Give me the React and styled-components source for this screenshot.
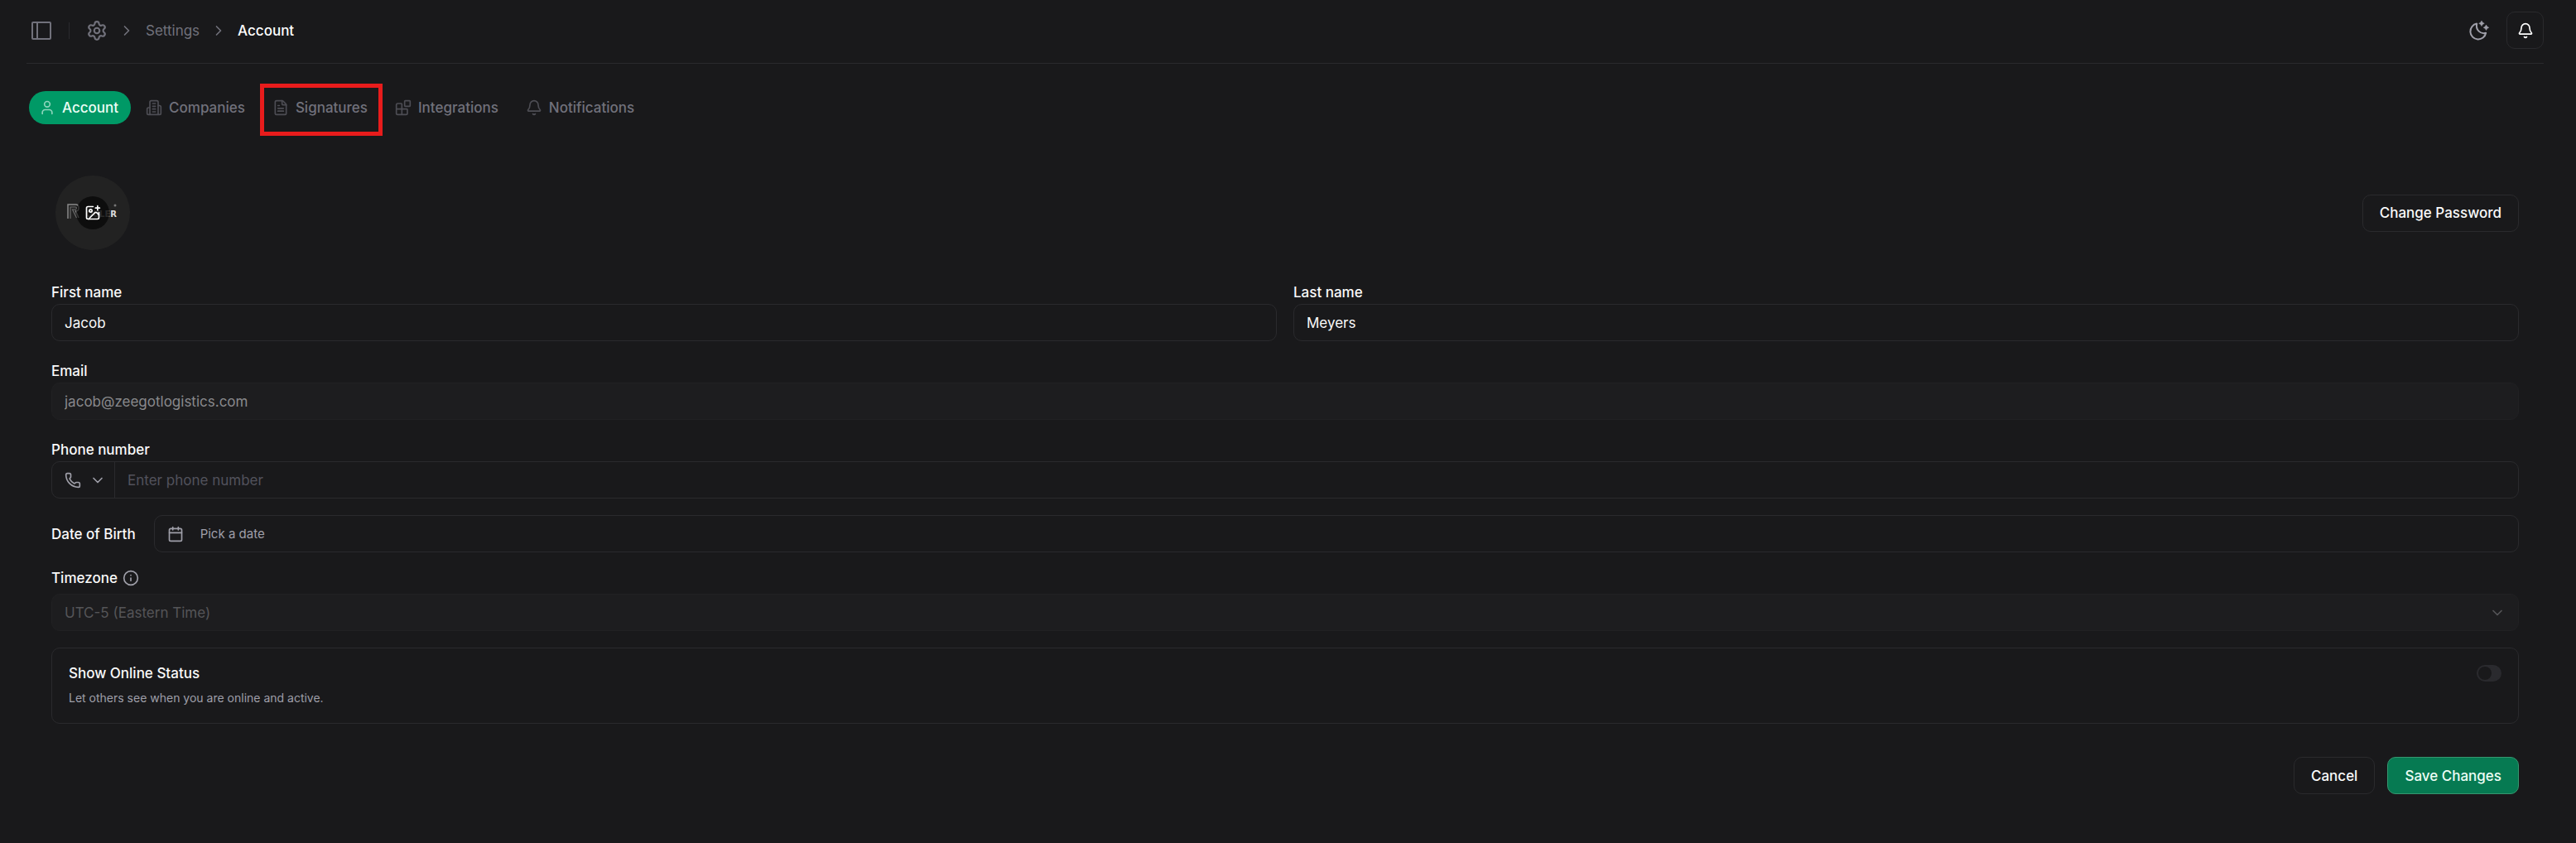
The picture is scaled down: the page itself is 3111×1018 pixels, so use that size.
import React, { useState } from "react";
import styled, { createGlobalStyle, css } from "styled-components";
import {
  Bell,
  Blocks,
  Calendar,
  ChevronDown,
  ChevronRight,
  FileText,
  ImagePlus,
  Info,
  Phone,
  Settings,
  User,
} from "lucide-react";

const GlobalStyle = createGlobalStyle`
  :root {
    --background: #19191b;
    --border: #2a2a2d;
    --foreground: #fafafa;
    --muted: #9f9fa9;
    --subtle: #71717b;
    --faint: #52525c;
    --primary: #009966;
  }

  * {
    box-sizing: border-box;
  }

  body {
    margin: 0;
    background: var(--background);
    color: var(--foreground);
    font-family: Inter, "Liberation Sans", sans-serif;
    font-size: 17px;
    line-height: 22px;
  }

  button,
  input,
  select {
    font: inherit;
    color: inherit;
  }
`;

const Page = styled.div`
  padding: 0 39px 56px 32px;
`;

const Header = styled.header`
  display: flex;
  align-items: center;
  justify-content: space-between;
  height: 77px;
  padding-bottom: 3px;
  border-bottom: 1px solid var(--border);
`;

const HeaderGroup = styled.div`
  display: flex;
  align-items: center;
  gap: ${({ $gap }) => $gap}px;
`;

const IconButton = styled.button`
  display: flex;
  align-items: center;
  justify-content: center;
  width: ${({ $size }) => $size}px;
  height: ${({ $size }) => $size}px;
  padding: 0;
  color: ${({ $color }) => $color};
  background: transparent;
  border: ${({ $outlined }) => ($outlined ? "1px solid var(--border)" : "none")};
  border-radius: 10px;
  cursor: pointer;
`;

const HeaderDivider = styled.span`
  width: 1px;
  height: 20px;
  margin-right: 5px;
  background: var(--border);
`;

const Breadcrumb = styled.nav`
  display: flex;
  align-items: center;
  gap: 13px;
  color: var(--subtle);
`;

const Crumb = styled.a`
  display: flex;
  color: ${({ $current }) => ($current ? "#ffffff" : "var(--subtle)")};
  font-weight: ${({ $current }) => ($current ? 500 : 400)};
  text-decoration: none;
`;

const Tabs = styled.nav`
  display: flex;
  gap: 6px;
  padding: 33px 3px 0;
`;

const Tab = styled.a`
  position: relative;
  display: flex;
  align-items: center;
  gap: 8px;
  height: 40px;
  padding: 0 15px 0 12px;
  border-radius: 20px;
  color: var(--subtle);
  font-weight: 500;
  text-decoration: none;

  svg {
    opacity: 0.6;
  }

  ${({ $active }) =>
    $active &&
    css`
      color: #ecfdf5;
      background: var(--primary);
    `}
`;

const Highlight = styled.span`
  position: absolute;
  inset: -9px -3px -14px;
  border: 5px solid #e81c1c;
  pointer-events: none;
`;

const Form = styled.form`
  display: flex;
  flex-direction: column;
  padding: 62px 30px 0;
`;

const ProfileRow = styled.div`
  display: flex;
  align-items: center;
  justify-content: space-between;
  margin-bottom: 40px;
  padding-left: 5px;
`;

const Avatar = styled.div`
  display: grid;
  place-items: center;
  width: 90px;
  height: 90px;
  border-radius: 50%;
  background: #222222;

  > * {
    grid-area: 1 / 1;
  }
`;

const AvatarUpload = styled.button`
  display: flex;
  align-items: center;
  justify-content: center;
  width: 40px;
  height: 40px;
  padding: 0;
  border: none;
  border-radius: 50%;
  color: #ffffff;
  background: rgba(0, 0, 0, 0.6);
  cursor: pointer;
`;

const Button = styled.button`
  height: 45px;
  padding: 0 20px;
  border: 1px solid ${({ $primary }) => ($primary ? "#36966f" : "var(--border)")};
  border-radius: 10px;
  color: ${({ $primary }) => ($primary ? "#ecfdf5" : "var(--foreground)")};
  background: ${({ $primary }) => ($primary ? "#067a52" : "transparent")};
  font-weight: 500;
  cursor: pointer;
`;

const Columns = styled.div`
  display: grid;
  grid-template-columns: 1fr 1fr;
  gap: 20px;
`;

const Field = styled.div`
  display: flex;
  flex-direction: column;
  gap: 3px;
  margin-bottom: ${({ $last }) => ($last ? 20 : 25)}px;
`;

const Label = styled.label`
  font-weight: 500;
`;

const box = css`
  width: 100%;
  height: 45px;
  border: 1px solid var(--border);
  border-radius: 10px;
  background: transparent;
`;

const TextInput = styled.input`
  ${box}
  padding: 0 15px;
  outline: none;

  &:disabled {
    color: #89898c;
    border-color: #212123;
    background: #1d1d1f;
  }
`;

const PhoneBox = styled.div`
  ${box}
  display: flex;
`;

const CountryPicker = styled.div`
  display: grid;
  align-items: center;
  width: 76px;
  flex-shrink: 0;
  color: var(--muted);
  border-right: 1px solid var(--border);

  > * {
    grid-area: 1 / 1;
  }
`;

const CountryIcons = styled.span`
  display: flex;
  gap: 10px;
  padding-left: 15px;
`;

const CountrySelect = styled.select`
  width: 100%;
  height: 100%;
  opacity: 0;
  cursor: pointer;
`;

const PhoneInput = styled.input`
  flex: 1;
  padding: 0 15px;
  border: none;
  background: transparent;
  outline: none;

  &::placeholder {
    color: var(--faint);
  }
`;

const DateRow = styled.div`
  display: flex;
  align-items: center;
  gap: 22px;
  margin-bottom: 20px;

  label {
    white-space: nowrap;
  }
`;

const DateButton = styled.button`
  ${box}
  display: flex;
  align-items: center;
  gap: 20px;
  padding: 0 15px;
  color: var(--muted);
  font-size: 15px;
  cursor: pointer;
`;

const TimezoneField = styled.div`
  display: flex;
  flex-direction: column;
  gap: 8px;
  margin-bottom: 20px;
`;

const LabelRow = styled.div`
  display: flex;
  align-items: center;
  gap: 6px;

  svg {
    color: var(--muted);
  }
`;

const SelectBox = styled.div`
  display: grid;
  align-items: center;
  color: #555558;

  > * {
    grid-area: 1 / 1;
  }

  svg {
    justify-self: end;
    margin-right: 16px;
    pointer-events: none;
  }
`;

const Select = styled.select`
  ${box}
  padding: 0 15px;
  appearance: none;
  border-color: #212123;
  background: #1d1d1f;
  opacity: 1;
`;

const StatusCard = styled.section`
  display: flex;
  align-items: flex-start;
  justify-content: space-between;
  margin-bottom: 40px;
  padding: 20px;
  border: 1px solid var(--border);
  border-radius: 10px;
`;

const StatusText = styled.div`
  display: flex;
  flex-direction: column;
  gap: 10px;
  line-height: 20px;

  p {
    margin: 0;
    color: var(--muted);
    font-size: 14px;
  }
`;

const Switch = styled.input`
  display: flex;
  align-items: center;
  width: 30px;
  height: 20px;
  margin: 0;
  padding: 0 2px;
  appearance: none;
  border-radius: 10px;
  background: #2a2a2e;
  cursor: pointer;

  &::before {
    content: "";
    width: 16px;
    height: 16px;
    border-radius: 50%;
    background: var(--background);
  }

  &:checked {
    justify-content: flex-end;
    background: var(--primary);
  }
`;

const Actions = styled.div`
  display: flex;
  justify-content: flex-end;
  gap: 15px;
`;

const PanelIcon = () => (
  <svg width="24" height="22" viewBox="0 0 24 22" fill="none" stroke="currentColor" strokeWidth="2">
    <rect x="1" y="1" width="22" height="20" rx="1" />
    <path d="M7 1v20" />
  </svg>
);

const BuildingIcon = ({ size }) => (
  <svg
    width={size}
    height={size}
    viewBox="0 0 24 24"
    fill="none"
    stroke="currentColor"
    strokeWidth="2"
    strokeLinecap="round"
    strokeLinejoin="round"
  >
    <path d="M6 22V4a2 2 0 0 1 2-2h8a2 2 0 0 1 2 2v18Z" />
    <path d="M6 12H4a2 2 0 0 0-2 2v6a2 2 0 0 0 2 2h2M18 9h2a2 2 0 0 1 2 2v9a2 2 0 0 1-2 2h-2" />
    <path d="M10 6h4M10 10h4M10 14h4M10 18h4" />
  </svg>
);

const MoonIcon = () => (
  <svg width="24" height="24" viewBox="0 0 24 24">
    <path
      d="M9.2 3.6A9.500 9.500 0 1 0 20.200 14.800C13.500 16.500 7.500 11 9.200 3.600Z"
      fill="none"
      stroke="currentColor"
      strokeWidth="2"
      strokeLinejoin="round"
    />
    <path
      d="M15 0q.7 2.600 3.300 3.300Q15.700 4 15 6.600 14.300 4 11.700 3.300 14.300 2.600 15 0ZM20.500 5q.7 2.600 3.300 3.300-2.600.7-3.300 3.300-.7-2.600-3.300-3.300Q19.800 7.600 20.500 5Z"
      fill="currentColor"
      stroke="currentColor"
      strokeWidth="0.5"
    />
  </svg>
);

const AvatarLogo = () => (
  <svg width="64" height="24" viewBox="0 0 64 24" fill="none">
    <path d="M2 19V2h9.500q3.500 0 3.500 4t-3.500 4L15 18" stroke="#8a8a8a" strokeWidth="1.500" />
    <path d="M5 19V5h6q1.500 0 1.500 1.500T11 8H7.500l5 10" stroke="#6a6a6a" strokeWidth="1.200" />
    <text x="61" y="17" textAnchor="end" fontSize="10" fontWeight="700" fontFamily="DejaVu Sans, sans-serif">
      <tspan fill="#666666">OULE</tspan>
      <tspan fill="#dedede">R</tspan>
    </text>
    <circle cx="59" cy="3" r="1.500" fill="#777777" />
  </svg>
);

const tabs = [
  { label: "Account", icon: User, active: true },
  { label: "Companies", icon: BuildingIcon },
  { label: "Signatures", icon: FileText, highlighted: true },
  { label: "Integrations", icon: Blocks },
  { label: "Notifications", icon: Bell },
];

export default function App() {
  const [firstName, setFirstName] = useState("Jacob");
  const [lastName, setLastName] = useState("Meyers");
  const [online, setOnline] = useState(false);

  return (
    <Page>
      <GlobalStyle />
      <Header>
        <HeaderGroup $gap={15}>
          <IconButton type="button" $size={36} $color="var(--subtle)" aria-label="Toggle sidebar">
            <PanelIcon />
          </IconButton>
          <HeaderDivider />
          <Breadcrumb aria-label="Breadcrumb">
            <Crumb href="#home" aria-label="Home">
              <Settings size={26} />
            </Crumb>
            <ChevronRight size={20} />
            <Crumb href="#settings">Settings</Crumb>
            <ChevronRight size={20} />
            <Crumb href="#account" $current>
              Account
            </Crumb>
          </Breadcrumb>
        </HeaderGroup>
        <HeaderGroup $gap={20}>
          <IconButton type="button" $size={26} $color="var(--muted)" aria-label="Toggle theme">
            <MoonIcon />
          </IconButton>
          <IconButton type="button" $size={45} $color="#ffffff" $outlined aria-label="Notifications">
            <Bell size={20} />
          </IconButton>
        </HeaderGroup>
      </Header>

      <Tabs aria-label="Settings sections">
        {tabs.map(({ label, icon: Icon, active, highlighted }) => (
          <Tab key={label} href={`#${label.toLowerCase()}`} $active={active}>
            <Icon size={20} />
            {label}
            {highlighted && <Highlight />}
          </Tab>
        ))}
      </Tabs>

      <Form onSubmit={(e) => e.preventDefault()}>
        <ProfileRow>
          <Avatar>
            <AvatarLogo />
            <AvatarUpload type="button" aria-label="Upload avatar">
              <ImagePlus size={20} />
            </AvatarUpload>
          </Avatar>
          <Button type="button">Change Password</Button>
        </ProfileRow>

        <Columns>
          <Field>
            <Label htmlFor="firstName">First name</Label>
            <TextInput id="firstName" value={firstName} onChange={(e) => setFirstName(e.target.value)} />
          </Field>
          <Field>
            <Label htmlFor="lastName">Last name</Label>
            <TextInput id="lastName" value={lastName} onChange={(e) => setLastName(e.target.value)} />
          </Field>
        </Columns>

        <Field>
          <Label htmlFor="email">Email</Label>
          <TextInput id="email" type="email" defaultValue="jacob@zeegotlogistics.com" disabled />
        </Field>

        <Field $last>
          <Label htmlFor="phone">Phone number</Label>
          <PhoneBox>
            <CountryPicker>
              <CountryIcons>
                <Phone size={20} />
                <ChevronDown size={20} />
              </CountryIcons>
              <CountrySelect aria-label="Country" />
            </CountryPicker>
            <PhoneInput id="phone" type="tel" placeholder="Enter phone number" />
          </PhoneBox>
        </Field>

        <DateRow>
          <Label htmlFor="birthDate">Date of Birth</Label>
          <DateButton id="birthDate" type="button">
            <Calendar size={20} />
            Pick a date
          </DateButton>
        </DateRow>

        <TimezoneField>
          <LabelRow>
            <Label htmlFor="timezone">Timezone</Label>
            <Info size={20} />
          </LabelRow>
          <SelectBox>
            <Select id="timezone" disabled>
              <option>UTC-5 (Eastern Time)</option>
            </Select>
            <ChevronDown size={20} />
          </SelectBox>
        </TimezoneField>

        <StatusCard>
          <StatusText>
            <Label htmlFor="online">Show Online Status</Label>
            <p>Let others see when you are online and active.</p>
          </StatusText>
          <Switch
            id="online"
            type="checkbox"
            role="switch"
            checked={online}
            onChange={(e) => setOnline(e.target.checked)}
          />
        </StatusCard>

        <Actions>
          <Button type="button">Cancel</Button>
          <Button type="submit" $primary>
            Save Changes
          </Button>
        </Actions>
      </Form>
    </Page>
  );
}
